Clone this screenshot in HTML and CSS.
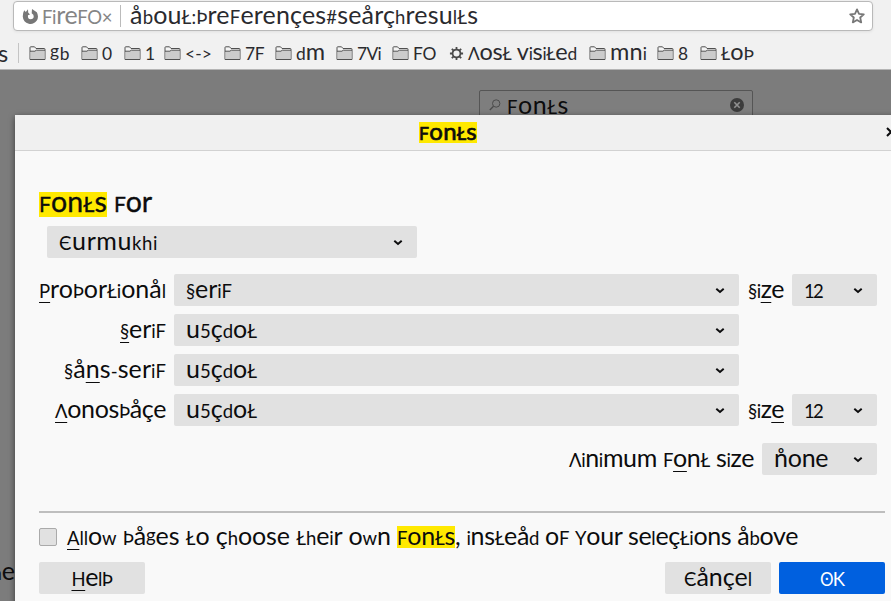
FILE: index.html
```
<!DOCTYPE html>
<html lang="en">
<head>
<meta charset="utf-8">
<title>Fonts</title>
<link rel="stylesheet" href="styles.css">
</head>
<body>
<svg class="defs" width="0" height="0">
  <symbol id="folder" viewBox="0 0 17 15"><path d="M1 13.5V1.5Q1 .8 1.8.8H5.5L7 2.5H15.2Q16 2.5 16 3.3V13.5Z" fill="#f4f4f4" stroke="#505050"/><path d="M1.5 5.5H6L7.2 4.4H15.5V13H1.5Z" fill="#ccc"/><path d="M1 5.2H6L7.2 4.2H16" fill="none" stroke="#505050"/></symbol>
  <symbol id="chevron" viewBox="0 0 10 8"><path d="M1.3 1.8L5 5L8.7 1.8" fill="none" stroke="#0c0c0d" stroke-width="2"/></symbol>
</svg>
<div class="window">
  <header class="toolbar">
    <div class="urlbar">
      <svg class="fox" viewBox="0 0 17 17"><path d="M2.2 2.2L3.8 4L6 1.2L6.2 4.5L8 6.5L6 7.2Q5.5 11 8.5 11.2Q12.8 10.8 11.3 6.8L9.7 5.2L10 1L12.6 2.8L14.8 4.2Q17.2 8.6 14.8 12.5Q11.7 16.8 6.8 15.8Q1.2 14.2.8 8.8Q.7 5 2.2 2.2Z" fill="#777"/></svg>
      <span class="g identity" data-w="70">FirefO×</span>
      <span class="divider"></span>
      <span class="g url" data-w="348">åbout:preferençes#seårçhresults</span>
      <svg class="star" viewBox="0 0 16 16"><path d="M8 1.4L10 5.8L14.8 6.3L11.2 9.5L12.2 14.4L8 11.9L3.8 14.4L4.8 9.5L1.2 6.3L6 5.8Z" fill="none" stroke="#777" stroke-width="1.8" stroke-linejoin="round"/></svg>
    </div>
    <nav class="bookmarks">
      <span class="g cut">s</span>
      <span class="bm"><svg><use href="#folder"/></svg><span class="g" data-w="20">gb</span></span>
      <span class="bm"><svg><use href="#folder"/></svg><span class="g" data-w="10">0</span></span>
      <span class="bm"><svg><use href="#folder"/></svg><span class="g" data-w="8">1</span></span>
      <span class="bm"><svg><use href="#folder"/></svg><span class="g" data-w="27">&lt;-&gt;</span></span>
      <span class="bm"><svg><use href="#folder"/></svg><span class="g" data-w="19">7F</span></span>
      <span class="bm"><svg><use href="#folder"/></svg><span class="g" data-w="29">dm</span></span>
      <span class="bm"><svg><use href="#folder"/></svg><span class="g" data-w="24">7Vi</span></span>
      <span class="bm"><svg><use href="#folder"/></svg><span class="g" data-w="23">FO</span></span>
      <span class="bm"><svg class="gear" viewBox="0 0 16 16"><circle cx="8" cy="8" r="4.2" fill="none" stroke="#4a4a4a" stroke-width="1.9"/><path d="M8 1V3.5M8 12.5V15M1 8H3.5M12.5 8H15M3 3L5 5M11 11L13 13M3 13L5 11M11 5L13 3" stroke="#4a4a4a" stroke-width="1.9"/></svg><span class="g" data-w="109">Λost visited</span></span>
      <span class="bm"><svg><use href="#folder"/></svg><span class="g" data-w="37">mni</span></span>
      <span class="bm"><svg><use href="#folder"/></svg><span class="g" data-w="10">8</span></span>
      <span class="bm"><svg><use href="#folder"/></svg><span class="g" data-w="33">top</span></span>
    </nav>
  </header>
  <main class="page">
    <div class="search">
      <svg class="lens" viewBox="0 0 12 12"><circle cx="7.2" cy="4.5" r="3.7" fill="none" stroke="#4b4b4b"/><path d="M4.5 7.2L.8 11" stroke="#4b4b4b" stroke-width="1.3"/></svg>
      <span class="g" data-w="62">Fonts</span>
      <svg class="clear" viewBox="0 0 14 14"><circle cx="7" cy="7" r="7" fill="#3c3c3c"/><path d="M4.3 4.3L9.7 9.7M9.7 4.3L4.3 9.7" stroke="#919191" stroke-width="1.6"/></svg>
    </div>
    <span class="g behind">he</span>
    <section class="dialog">
      <div class="title"><mark class="g" data-w="58">Fonts</mark><svg class="close" viewBox="0 0 10 10"><path d="M1 1L9 9M9 1L1 9" stroke="#0c0c0d" stroke-width="2"/></svg></div>
      <div class="body">
        <h1><mark class="g" data-w="68">Fonts</mark><span class="g" data-w="38">For</span></h1>
        <div class="select lang"><span class="g" data-w="99">Єurmukhi</span><svg><use href="#chevron"/></svg></div>
        <div class="grid">
          <label class="g" data-w="127"><u>P</u>roportionål</label>
          <div class="select"><span class="g" data-w="46">§eriF</span><svg><use href="#chevron"/></svg></div>
          <label class="g" data-w="36">§i<u>z</u>e</label>
          <div class="select"><span class="g" data-w="18">12</span><svg><use href="#chevron"/></svg></div>
          <label class="g" data-w="46"><u>§</u>eriF</label>
          <div class="select"><span class="g" data-w="71">u5çdot</span><svg><use href="#chevron"/></svg></div>
          <i></i><i></i>
          <label class="g" data-w="102">§å<u>n</u>s-seriF</label>
          <div class="select"><span class="g" data-w="71">u5çdot</span><svg><use href="#chevron"/></svg></div>
          <i></i><i></i>
          <label class="g" data-w="111"><u>Λ</u>onospåçe</label>
          <div class="select"><span class="g" data-w="71">u5çdot</span><svg><use href="#chevron"/></svg></div>
          <label class="g" data-w="36">§iz<u>e</u></label>
          <div class="select"><span class="g" data-w="18">12</span><svg><use href="#chevron"/></svg></div>
        </div>
        <div class="minimum">
          <label class="g" data-w="185">Λinimum F<u>o</u>nt size</label>
          <div class="select"><span class="g" data-w="54">n̊one</span><svg><use href="#chevron"/></svg></div>
        </div>
        <hr>
        <div class="allow"><span class="check"></span><span class="g" data-w="330"><u>A</u>llow påges to çhoose their own </span><mark class="g" data-w="58">Fonts</mark><span class="g" data-w="343">, insteåd oF your seleçtions åbove</span></div>
        <div class="buttons">
          <div class="button"><span class="g" data-w="41"><u>H</u>elp</span></div>
          <div class="button right"><span class="g" data-w="68">Єånçel</span></div>
          <div class="button primary"><span class="g" data-w="24">ʘK</span></div>
        </div>
      </div>
    </section>
  </main>
</div>
<script src="type.js"></script>
</body>
</html>
```
FILE: styles.css
```
* { box-sizing: border-box; }
body { margin: 0; background: #f1f1f1; color: #0c0c0d; overflow: hidden; }
.defs { position: absolute; }
.window { width: 891px; height: 601px; overflow: hidden; display: flex; flex-direction: column; }
.g { font-family: Lato, "Noto Sans", "DejaVu Sans", sans-serif; font-size: 25px; line-height: 24px; white-space: pre; flex: none; font-variant-ligatures: none; }
.sm { font-size: .74em; line-height: 0; }
.raised { vertical-align: .16em; }
u { text-decoration: underline; text-decoration-thickness: 1px; text-underline-offset: 4px; text-decoration-skip-ink: none; }
mark { background: #ffe900; color: inherit; }

.toolbar { height: 70px; flex: none; background: #f1f1f1; border-bottom: 1px solid #b5b5b5; }
.urlbar { height: 30px; width: 860px; margin: 1px 0 0 13px; background: #fff; border: 1px solid #b9b9b9; border-radius: 4px; display: flex; align-items: center; padding: 0 7px 0 8px; box-shadow: 0 1px 3px #0001; }
.urlbar .g { padding-bottom: 5px; color: #2a2a2e; }
.urlbar .identity { color: #858585; margin-left: 3px; }
.fox { width: 17px; height: 17px; }
.divider { width: 1px; height: 22px; background: #bbb; margin: 0 9px 0 8px; }
.star { width: 16px; height: 16px; margin-left: auto; }
.bookmarks { display: grid; grid-template-columns: 29px 52px 43px 40px 60px 51px 61px 56px 57px 140px 68px 43px 60px; align-items: center; height: 36px; margin-top: 4px; }
.bookmarks .g { font-size: 23.5px; padding-bottom: 4px; color: #2a2a2e; }
.bookmarks .cut { margin-left: -2px; width: 21px; border-right: 1px solid #c4c4c4; padding-bottom: 0; line-height: 20px; }
.bm { display: flex; align-items: center; gap: 4px; }
.bm svg { width: 17px; height: 15px; flex: none; }
.bm .gear { width: 15px; height: 15px; }

.page { position: relative; flex: 1; background: #7c7c7c; }
.search { position: absolute; left: 479px; top: 20px; width: 274px; height: 32px; border: 1px solid #555; border-radius: 2px; display: flex; align-items: center; padding: 0 8px 2px 9px; gap: 6px; background: #7e7e7e; }
.search .g { padding-bottom: 2px; }
.lens { width: 12px; height: 12px; }
.clear { width: 14px; height: 14px; margin-left: auto; }
.behind { position: absolute; right: 876px; top: 488px; }
.dialog { position: absolute; left: 15px; top: 45px; width: 893px; height: 540px; background: #f9f9f9; border-radius: 2px; box-shadow: 0 2px 6px #0008; }
.title { height: 36px; background: #f0f0f0; border-bottom: 1px solid #d2d2d2; display: flex; align-items: center; padding: 0 0 1px 404px; }
.title mark { font-size: 24px; line-height: 18px; height: 21px; -webkit-text-stroke: .7px; }
.close { width: 10px; height: 10px; margin-left: 409px; }
.body { padding: 41px 23px 0 24px; }
h1 { margin: 0 0 9px; height: 25px; display: flex; gap: 7px; font-weight: 400; }
h1 .g { font-size: 28.5px; line-height: 19px; height: 25px; -webkit-text-stroke: .35px; }
.select { height: 32px; background: #e1e1e1; border-radius: 2px; display: flex; align-items: center; justify-content: space-between; padding: 0 14px 0 12px; }
.select .g, .button .g { padding-bottom: 5px; }
.select svg { width: 10px; height: 8px; flex: none; position: relative; top: 1px; }
.lang { width: 370px; margin-left: 8px; }
.grid { display: grid; grid-template-columns: 127px 565px 37px 85px; column-gap: 8px; row-gap: 8px; margin-top: 16px; align-items: center; }
.grid label { justify-self: end; padding-bottom: 5px; }
.minimum { display: flex; justify-content: flex-end; align-items: center; gap: 8px; margin: 17px 8px 0 0; }
.minimum label { padding-bottom: 5px; }
.minimum .select { width: 115px; }
hr { border: 0; height: 2px; background: #bebebe; margin: 36px 0 13px; }
.allow { display: flex; align-items: center; height: 22px; }
.check { width: 18px; height: 18px; border: 1px solid #aaa; border-radius: 2px; background: #e1e1e1; margin-right: 10px; flex: none; }
.allow .g { height: 22px; line-height: 18px; }
.buttons { display: flex; gap: 8px; margin-top: 14px; }
.button { width: 106px; height: 32px; border-radius: 2px; background: #e1e1e1; display: flex; align-items: center; justify-content: center; }
.right { margin-left: auto; }
.primary { background: #0060df; color: #fff; }
```
FILE: type.js
```
// Unicase lettering: ascender and descender letters become small forms beside full-height x-height letters.
const forms = { t: "Ł", p: "Þ", y: "Y", f: "F" };
const small = /[A-Z0-9bdfghilkptywΛЄʘ§<>#:×-]/;

function typeset(node) {
  for (const child of [...node.childNodes]) {
    if (child.nodeType === 1) { typeset(child); continue; }
    const out = document.createDocumentFragment();
    for (const c of child.data) {
      if (small.test(c)) {
        const s = document.createElement("span");
        s.className = c === "g" ? "sm raised" : "sm";
        s.textContent = forms[c] || c;
        out.append(s);
      } else out.append(c);
    }
    child.replaceWith(out);
  }
}

document.fonts.ready.then(() => {
  for (const el of document.querySelectorAll(".g")) {
    const count = [...el.textContent].length;
    typeset(el);
    if (el.dataset.w) {
      const range = document.createRange();
      range.selectNodeContents(el);
      el.style.letterSpacing = (el.dataset.w - range.getBoundingClientRect().width) / count + "px";
    }
  }
});
```
